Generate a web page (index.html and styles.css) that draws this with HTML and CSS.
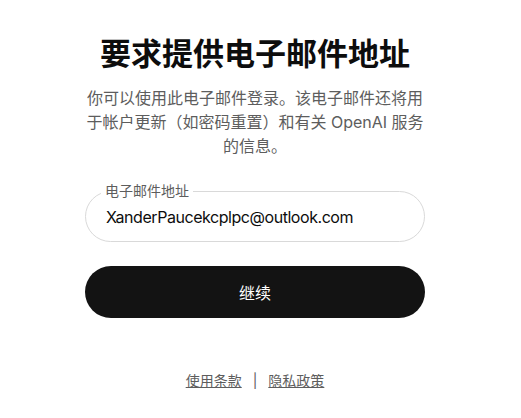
FILE: index.html
```html
<!DOCTYPE html>
<html lang="zh-CN">
<head>
    <meta charset="UTF-8">
    <meta name="viewport" content="width=device-width, initial-scale=1.0">
    <title>要求提供电子邮件地址</title>
    <link rel="stylesheet" href="styles.css">
</head>
<body>
    <div class="page">
        <div class="card">
            <h1 class="title">要求提供电子邮件地址</h1>
            <p class="subtitle">你可以使用此电子邮件登录。该电子邮件还将用于帐户更新（如密码重置）和有关 OpenAI 服务的信息。</p>

            <div class="field">
                <label class="field-label" for="email">电子邮件地址</label>
                <input class="field-input" id="email" type="email" value="XanderPaucekcplpc@outlook.com">
            </div>

            <button class="continue-btn">继续</button>

            <div class="footer">
                <a href="#" class="footer-link">使用条款</a>
                <span class="sep">|</span>
                <a href="#" class="footer-link">隐私政策</a>
            </div>
        </div>
    </div>
</body>
</html>
```

FILE: styles.css
```css
body {
    margin: 0;
    background-color: #fff;
    font-family: Inter, "Noto Sans CJK SC", sans-serif;
    color: #0d0d0d;
}
.page {
    display: flex;
    justify-content: center;
    padding: 36px 11px 0 0; /* content sits a bit left of centre */
}
.card {
    width: 340px;
    display: flex;
    flex-direction: column;
    align-items: stretch;
}
.title {
    margin: 0;
    font-size: 31px;
    line-height: 36px;
    font-weight: 700;
    text-align: center;
    color: #0d0d0d;
}
.subtitle {
    margin: 14px 0 0;
    font-size: 16px;
    line-height: 24px;
    text-align: center;
    color: #5d5d5d;
}
.field {
    position: relative;
    margin-top: 33px;
}
.field-label {
    position: absolute;
    top: -9px;
    left: 16px;
    padding: 0 4px;
    background-color: #fff;
    font-size: 14px;
    line-height: 17px;
    color: #5d5d5d;
}
.field-input {
    box-sizing: border-box;
    width: 100%;
    height: 51px;
    padding: 0 20px;
    border: 1px solid #d9d9d9;
    border-radius: 26px;
    font-family: inherit;
    font-size: 16px;
    letter-spacing: -0.45px;
    color: #0d0d0d;
    outline: none;
}
.continue-btn {
    margin-top: 24px;
    height: 52px;
    border: none;
    border-radius: 26px;
    background-color: #131313;
    color: #fff;
    font-family: inherit;
    font-size: 16px;
    cursor: pointer;
}
.footer {
    display: flex;
    justify-content: center;
    align-items: center;
    gap: 11px;
    margin-top: 52px;
    font-size: 14px;
    color: #5d5d5d;
}
.footer-link {
    color: #5d5d5d;
    text-decoration: underline;
}
```
